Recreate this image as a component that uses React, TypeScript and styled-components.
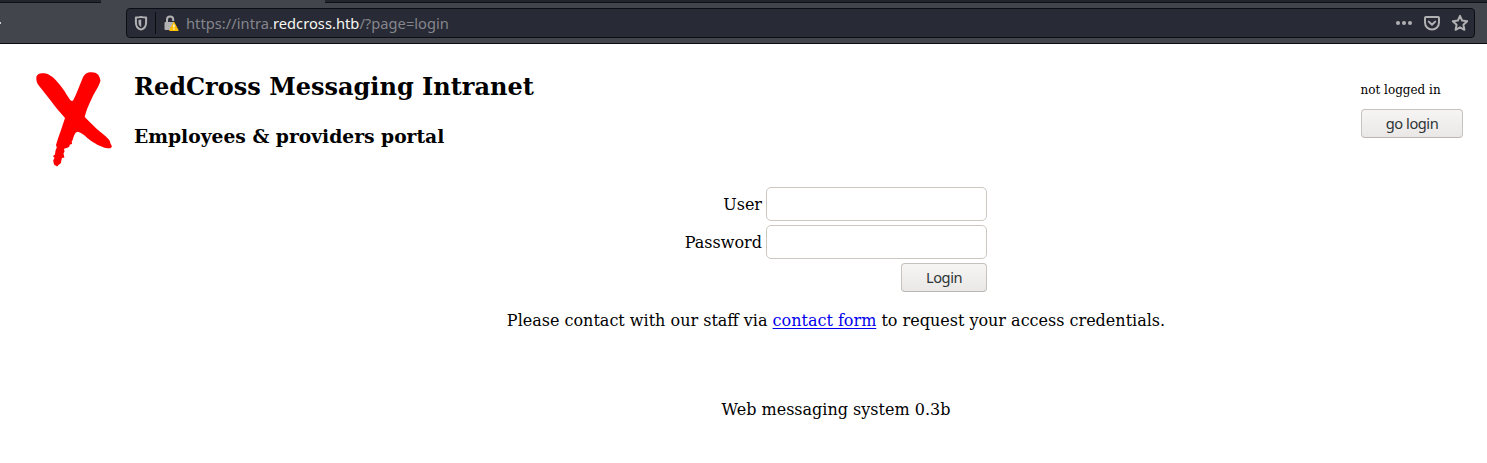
import React from "react";
import styled, { createGlobalStyle } from "styled-components";

const GlobalStyle = createGlobalStyle`
  * { box-sizing: border-box; }
  body {
    margin: 0;
    background: #fff;
    color: #000;
    font-family: "DejaVu Serif", serif;
    font-size: 16px;
    line-height: 19px;
    overflow: hidden;
  }
`;

const Page = styled.div`
  min-height: 463px;
`;

const Browser = styled.div`
  height: 44px;
  background: #42454c;
  border-bottom: 1px solid #0c0a14;
`;

const TabStrip = styled.div`
  display: flex;
  height: 3px;
`;

const TabSpace = styled.div<{ $width?: number }>`
  ${(p) => (p.$width ? `width: ${p.$width}px;` : "flex: 1;")}
  background: #23252e;
  border-bottom: 1px solid #0f1118;
`;

const ActiveTab = styled.div`
  width: 224px;
`;

const NavBar = styled.div`
  display: flex;
  align-items: flex-start;
  height: 40px;
  padding: 5px 12px 0 0;
`;

const ButtonEdge = styled.div`
  width: 1px;
  height: 2px;
  margin: 14px 125px 0 0;
  background: #d0d1d3;
`;

const UrlBar = styled.div`
  display: flex;
  align-items: center;
  flex: 1;
  height: 30px;
  padding: 0 5px 0 7px;
  border: 1px solid #0d0e13;
  border-radius: 4px;
  background: #282a36;
`;

const Divider = styled.div`
  width: 1px;
  height: 22px;
  margin: 0 8px 0 7px;
  background: #0d0e13;
`;

const Url = styled.div`
  flex: 1;
  margin-left: 6px;
  color: #85868c;
  font: 14.67px/20px "Noto Sans", sans-serif;
  letter-spacing: 0.03px;
  white-space: pre;
`;

const Host = styled.span`
  color: #f8f8f2;
`;

const UrlActions = styled.div`
  display: flex;
  align-items: center;
  gap: 10px;
`;

const Header = styled.header`
  display: flex;
  height: 143px;
  padding: 0 24px 0 34px;
`;

const Logo = styled.svg`
  width: 80px;
  height: 100px;
  margin-top: 26px;
`;

const Titles = styled.div`
  flex: 1;
  padding: 29px 0 0 20px;
`;

const Title = styled.h1`
  margin: 0 0 24px;
  font-size: 24px;
  line-height: 28px;
`;

const Subtitle = styled.h2`
  margin: 0;
  font-size: 18.72px;
  line-height: 22px;
`;

const Session = styled.div`
  width: 102px;
  padding-top: 39px;
`;

const Status = styled.div`
  height: 26px;
  margin-left: -0.5px;
  font-size: 12px;
  line-height: 15px;
`;

const Button = styled.button<{ $width: number }>`
  width: ${(p) => p.$width}px;
  height: 29px;
  padding: 0 0 1px;
  border: 1px solid #c6c2be;
  border-bottom-color: #bbb6b1;
  border-radius: 4px;
  background: linear-gradient(#f6f5f4, #eae8e6);
  color: #2e3436;
  font: 14.67px/20px "Noto Sans", sans-serif;
  letter-spacing: -0.45px;
`;

const Main = styled.main`
  display: flex;
  flex-direction: column;
  align-items: center;
  padding-left: 185px;
`;

const Form = styled.form`
  display: grid;
  grid-template-columns: 78px 221px;
  gap: 4px;
  align-items: center;
  justify-items: end;
  margin-right: 1px;
`;

const Label = styled.label`
  white-space: nowrap;
`;

const Input = styled.input`
  width: 221px;
  height: 34px;
  border: 1px solid #cdc7c2;
  border-radius: 5px;
  background: #fff;
`;

const SubmitCell = styled.div`
  grid-column: 2;
  display: flex;
`;

const Notice = styled.p`
  margin: 19px 0 0;
`;

const Link = styled.a`
  color: #0000ee;
  text-decoration: underline;
  text-decoration-thickness: 1px;
  text-underline-offset: 2px;
`;

const Footer = styled.footer`
  margin-top: 70px;
`;

const ShieldIcon = () => (
  <svg width="14" height="16" viewBox="0 0 14 16" fill="none">
    <path d="M7 1.900C5 2.400 3.200 2.500 1.900 2.500V7.500c0 3.600 2 6.200 5.100 7.100C10.100 13.700 12.100 11.100 12.100 7.500V2.500C10.800 2.500 9 2.400 7 1.900Z" stroke="#b1b1b3" strokeWidth="2" strokeLinejoin="round" />
    <path d="M7.200 4.500C6.200 4.800 5.400 5 4.500 5v2.500c0 2 .9 3.800 2.700 4.600Z" fill="#b1b1b3" />
  </svg>
);

const LockIcon = () => (
  <svg width="16" height="17" viewBox="0 0 16 17">
    <path d="M3 8V4.700a3.100 3.100 0 0 1 6.200 0V6" fill="none" stroke="#b1b1b3" strokeWidth="2" />
    <path d="M1.500 7H10v8H1.500a1 1 0 0 1-1-1V8a1 1 0 0 1 1-1Z" fill="#b1b1b3" />
    <path d="m9.900 7.500-4.100 7.800h8.200Z" fill="#ffbf00" stroke="#ffbf00" strokeWidth="1.200" strokeLinejoin="round" />
    <path d="M9.900 9.500v3M9.900 13.500v1.200" stroke="#fff" strokeWidth="1.300" />
  </svg>
);

const MoreIcon = () => (
  <svg width="18" height="18" viewBox="0 0 18 18" fill="#b1b1b3">
    <circle cx="3" cy="9" r="2" />
    <circle cx="9" cy="9" r="2" />
    <circle cx="15" cy="9" r="2" />
  </svg>
);

const PocketIcon = () => (
  <svg width="18" height="18" viewBox="0 0 18 18" fill="none" stroke="#b1b1b3" strokeWidth="2" strokeLinecap="round" strokeLinejoin="round">
    <path d="M3 3h12a1 1 0 0 1 1 1v4.500a7 7 0 0 1-14 0V4a1 1 0 0 1 1-1Z" />
    <path d="m5.800 7.600 3.200 3.200 3.200-3.200" />
  </svg>
);

const StarIcon = () => (
  <svg width="18" height="18" viewBox="0 0 18 18" fill="none" stroke="#b1b1b3" strokeWidth="2" strokeLinejoin="round">
    <path d="m9 1.900 2.100 4.700 5.100.6-3.800 3.500 1 5.100L9 13.300l-4.400 2.500 1-5.100-3.800-3.500 5.100-.6Z" />
  </svg>
);

const RedCrossLogo = () => (
  <Logo viewBox="34 70 80 100" fill="#ff0000">
    <path d="M36.300 78C36.500 74 40 72.900 44 73.200C49.500 73.500 55 78.500 60 85C65.500 91.500 67.500 97 71 100.700H73C76.500 94 79.500 85.500 82.500 78.500C84.500 73.500 87 72.300 91.500 72.200C97 72.100 99.500 75 100.500 80.500C99 86.500 95.500 90.500 92 98C88.500 105.500 86 111 84.700 117C90 122 95.500 128 101 132.500C105.500 136 110.500 140 110.300 143L112 146.500L110.500 148.300C103 148.500 96.500 144.500 90.500 140.500C85.500 137 82.500 132.500 77.500 131.800C74.500 132.500 74 136 72.500 140.500L71.700 141L72 144L70 144.500L69 147L66 148.300L64 148.800L64.500 151.500L63.500 153.500L64.200 156.800L64.500 157.500L62 158L61.200 161L61 163L58.500 165L57 166.500L54 164.500L53.200 160.500L54.500 158L53 156L55 154.500L55.500 150.500L56.800 147.500L56 145L58 138.500L61 130L65 118C60 112.500 55.500 107 51 101L38 84.500C36.800 82.500 36.300 80.500 36.300 78Z" />
  </Logo>
);

export default function App() {
  return (
    <Page>
      <GlobalStyle />
      <Browser>
        <TabStrip>
          <TabSpace $width={101} />
          <ActiveTab />
          <TabSpace />
        </TabStrip>
        <NavBar>
          <ButtonEdge />
          <UrlBar>
            <ShieldIcon />
            <Divider />
            <LockIcon />
            <Url>
              https://intra.<Host>redcross.htb</Host>/?page=login
            </Url>
            <UrlActions>
              <MoreIcon />
              <PocketIcon />
              <StarIcon />
            </UrlActions>
          </UrlBar>
        </NavBar>
      </Browser>
      <Header>
        <RedCrossLogo />
        <Titles>
          <Title>RedCross Messaging Intranet</Title>
          <Subtitle>Employees &amp; providers portal</Subtitle>
        </Titles>
        <Session>
          <Status>not logged in</Status>
          <Button $width={102} type="button">go login</Button>
        </Session>
      </Header>
      <Main>
        <Form onSubmit={(e) => e.preventDefault()}>
          <Label htmlFor="user">User</Label>
          <Input id="user" type="text" />
          <Label htmlFor="password">Password</Label>
          <Input id="password" type="password" />
          <SubmitCell>
            <Button $width={86} type="submit">Login</Button>
          </SubmitCell>
        </Form>
        <Notice>
          Please contact with our staff via <Link href="#contact">contact form</Link> to request your access credentials.
        </Notice>
        <Footer>Web messaging system 0.3b</Footer>
      </Main>
    </Page>
  );
}
